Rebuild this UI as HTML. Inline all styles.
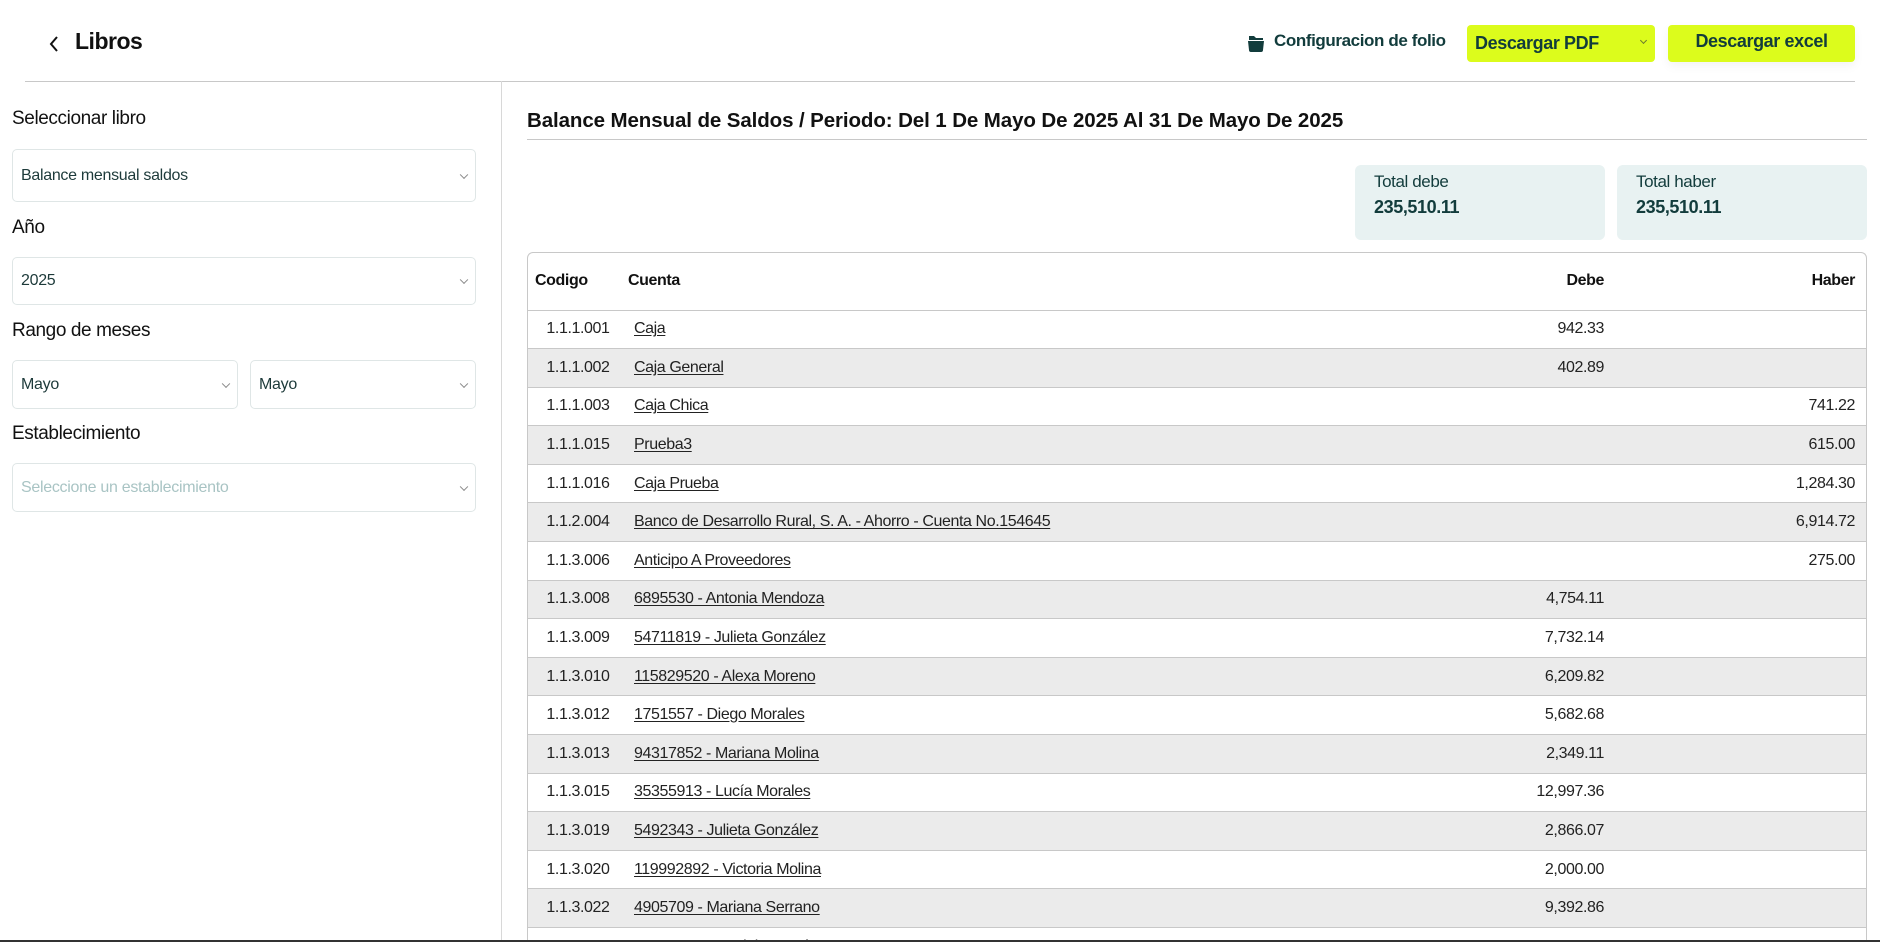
<!DOCTYPE html>
<html><head><meta charset="utf-8"><style>
*{box-sizing:border-box;margin:0;padding:0}
html,body{width:1880px;height:942px;overflow:hidden}
body{background:#fff;font-family:"Liberation Sans",sans-serif;color:#111;position:relative}
.abs{position:absolute}
.lbl{position:absolute;left:12px;font-size:19px;letter-spacing:-0.4px;color:#111}
.sel{position:absolute;border:1px solid #dfe6e6;border-radius:5px;font-size:16px;letter-spacing:-0.3px;color:#1d3a3a;padding-left:8px;display:flex;align-items:center}
.sel:after{content:"";position:absolute;right:8px;top:50%;width:5px;height:5px;border-right:1px solid #888;border-bottom:1px solid #888;transform:translateY(-70%) rotate(45deg)}
table{border-collapse:collapse;width:100%;font-size:16px;letter-spacing:-0.4px;color:#222}
td,th{height:38.6px;border-top:1px solid #c8c8c8;padding:0}
th{height:57px;border-top:none;text-align:left;font-weight:bold;color:#111}
tr:nth-child(odd) td{background:#ebebeb}
td.c{text-align:center;width:100px}
td.a{padding-left:6px}
td.a u{text-decoration:underline;text-underline-offset:2px}
td.d{text-align:right;width:260px}
td.h{text-align:right;width:262px;padding-right:11px}
</style></head><body>
<svg class="abs" style="left:48px;top:35px" width="12" height="18" viewBox="0 0 12 18"><path d="M9 2 L3 9 L9 16" fill="none" stroke="#111" stroke-width="2"/></svg>
<div class="abs" style="left:75px;top:28px;font-size:23px;font-weight:bold;letter-spacing:-0.5px">Libros</div>
<svg class="abs" style="left:1246px;top:33px" width="20" height="20" viewBox="0 0 20 20"><path d="M3 3 h5 l2 2 h7 v2 H3z" fill="#123c3c"/><path d="M2 8 h16 l-1 9 a2 2 0 0 1 -2 2 H5 a2 2 0 0 1 -2 -2z" fill="#123c3c"/></svg>
<div class="abs" style="left:1274px;top:31px;font-size:17px;font-weight:bold;letter-spacing:-0.4px;color:#123c3c">Configuracion de folio</div>
<div class="abs" style="left:1467px;top:25px;width:188px;height:37px;background:#dcfc1c;border-radius:4px;font-size:18px;font-weight:bold;letter-spacing:-0.4px;color:#123c3c;padding:8px 0 0 8px">Descargar PDF<span style="position:absolute;right:9px;top:13px;width:5px;height:5px;border-right:1px solid #6a7a30;border-bottom:1px solid #6a7a30;transform:rotate(45deg)"></span></div>
<div class="abs" style="left:1668px;top:25px;width:187px;height:37px;background:#dcfc1c;border-radius:4px;font-size:18px;font-weight:bold;letter-spacing:-0.4px;color:#123c3c;text-align:center;padding-top:6px;box-shadow:0 4px 10px rgba(0,0,0,0.05)">Descargar excel</div>
<div class="abs" style="left:25px;top:81px;width:1830px;height:1px;background:#c8c8c8"></div>
<div class="abs" style="left:501px;top:81px;width:1px;height:861px;background:#d8d8d8"></div>

<div class="lbl" style="top:108px">Seleccionar libro</div>
<div class="sel" style="left:12px;top:149px;width:464px;height:53px">Balance mensual saldos</div>
<div class="lbl" style="top:217px">Año</div>
<div class="sel" style="left:12px;top:257px;width:464px;height:48px">2025</div>
<div class="lbl" style="top:320px">Rango de meses</div>
<div class="sel" style="left:12px;top:360px;width:226px;height:49px">Mayo</div>
<div class="sel" style="left:250px;top:360px;width:226px;height:49px">Mayo</div>
<div class="lbl" style="top:423px">Establecimiento</div>
<div class="sel" style="left:12px;top:463px;width:464px;height:49px;color:#a9c4c4">Seleccione un establecimiento</div>

<div class="abs" style="left:527px;top:109px;font-size:20.5px;font-weight:bold;letter-spacing:-0.1px">Balance Mensual de Saldos / Periodo: Del 1 De Mayo De 2025 Al 31 De Mayo De 2025</div>
<div class="abs" style="left:527px;top:139px;width:1340px;height:1px;background:#c8c8c8"></div>
<div class="abs" style="left:1355px;top:165px;width:250px;height:75px;background:#e8f2f2;border-radius:6px;padding:7px 0 0 19px;color:#123c3c"><div style="font-size:17px;letter-spacing:-0.4px">Total debe</div><div style="font-size:18px;font-weight:bold;letter-spacing:-0.4px;margin-top:5px">235,510.11</div></div>
<div class="abs" style="left:1617px;top:165px;width:250px;height:75px;background:#e8f2f2;border-radius:6px;padding:7px 0 0 19px;color:#123c3c"><div style="font-size:17px;letter-spacing:-0.4px">Total haber</div><div style="font-size:18px;font-weight:bold;letter-spacing:-0.4px;margin-top:5px">235,510.11</div></div>

<div class="abs" style="left:527px;top:252px;width:1340px;height:688px;border:1px solid #c8c8c8;border-bottom:none;border-radius:6px 6px 0 0;overflow:hidden">
<table>
<tr><th style="padding-left:7px;width:100px">Codigo</th><th style="padding-left:0px">Cuenta</th><th style="text-align:right">Debe</th><th style="text-align:right;padding-right:11px">Haber</th></tr>
<tr><td class="c">1.1.1.001</td><td class="a"><u>Caja</u></td><td class="d">942.33</td><td class="h"></td></tr>
<tr><td class="c">1.1.1.002</td><td class="a"><u>Caja General</u></td><td class="d">402.89</td><td class="h"></td></tr>
<tr><td class="c">1.1.1.003</td><td class="a"><u>Caja Chica</u></td><td class="d"></td><td class="h">741.22</td></tr>
<tr><td class="c">1.1.1.015</td><td class="a"><u>Prueba3</u></td><td class="d"></td><td class="h">615.00</td></tr>
<tr><td class="c">1.1.1.016</td><td class="a"><u>Caja Prueba</u></td><td class="d"></td><td class="h">1,284.30</td></tr>
<tr><td class="c">1.1.2.004</td><td class="a"><u>Banco de Desarrollo Rural, S. A. - Ahorro - Cuenta No.154645</u></td><td class="d"></td><td class="h">6,914.72</td></tr>
<tr><td class="c">1.1.3.006</td><td class="a"><u>Anticipo A Proveedores</u></td><td class="d"></td><td class="h">275.00</td></tr>
<tr><td class="c">1.1.3.008</td><td class="a"><u>6895530 -  Antonia Mendoza</u></td><td class="d">4,754.11</td><td class="h"></td></tr>
<tr><td class="c">1.1.3.009</td><td class="a"><u>54711819 -  Julieta González</u></td><td class="d">7,732.14</td><td class="h"></td></tr>
<tr><td class="c">1.1.3.010</td><td class="a"><u>115829520 -  Alexa Moreno</u></td><td class="d">6,209.82</td><td class="h"></td></tr>
<tr><td class="c">1.1.3.012</td><td class="a"><u>1751557 -  Diego Morales</u></td><td class="d">5,682.68</td><td class="h"></td></tr>
<tr><td class="c">1.1.3.013</td><td class="a"><u>94317852 -  Mariana Molina</u></td><td class="d">2,349.11</td><td class="h"></td></tr>
<tr><td class="c">1.1.3.015</td><td class="a"><u>35355913 -  Lucía Morales</u></td><td class="d">12,997.36</td><td class="h"></td></tr>
<tr><td class="c">1.1.3.019</td><td class="a"><u>5492343 -  Julieta González</u></td><td class="d">2,866.07</td><td class="h"></td></tr>
<tr><td class="c">1.1.3.020</td><td class="a"><u>119992892 -  Victoria Molina</u></td><td class="d">2,000.00</td><td class="h"></td></tr>
<tr><td class="c">1.1.3.022</td><td class="a"><u>4905709 -  Mariana Serrano</u></td><td class="d">9,392.86</td><td class="h"></td></tr>
<tr><td class="c">1.1.3.023</td><td class="a"><u>34557083 -  Daniela García</u></td><td class="d">10,851.70</td><td class="h"></td></tr>
</table>
</div>
<div class="abs" style="left:0;top:940px;width:1880px;height:2px;background:#333"></div>
</body></html>
